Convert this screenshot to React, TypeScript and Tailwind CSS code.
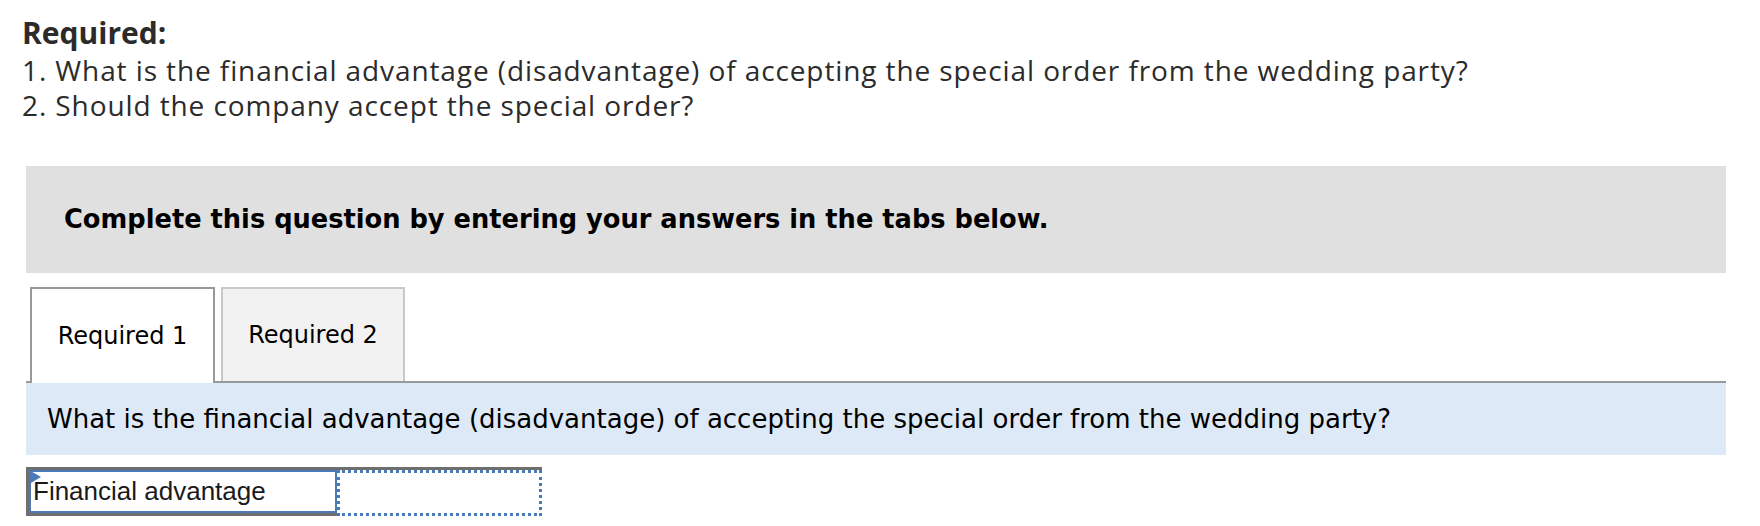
import React from "react";

export default function App() {
  return (
    <div className="w-[1760px] h-[526px] bg-white overflow-hidden">
      <div className="pl-[22px] pt-[12px] text-[#2b2b2b] font-['Open_Sans','Liberation_Sans',sans-serif]">
        <div className="text-[30px] leading-[41px] font-bold">Required:</div>
        <div className="text-[28px] leading-[35px] tracking-[0.9px]">1. What is the financial advantage (disadvantage) of accepting the special order from the wedding party?</div>
        <div className="text-[28px] leading-[35px] tracking-[0.9px]">2. Should the company accept the special order?</div>
      </div>
      <div className="ml-[26px] w-[1700px] mt-[43px] h-[107px] bg-[#e0e0e0] flex items-center pl-[38px] font-['Verdana','DejaVu_Sans',sans-serif] font-bold text-[25.7px] text-black">
        Complete this question by entering your answers in the tabs below.
      </div>
      <div className="ml-[26px] w-[1700px] mt-[14px]">
        <div className="flex items-end h-[96px] border-b-2 border-[#999] pl-[4px] gap-[6px]">
          <div className="relative w-[185px] h-[96px] -mb-[2px] bg-white border-2 border-b-0 border-[#999] flex items-center justify-center font-['Verdana','DejaVu_Sans',sans-serif] text-[24px] text-black">
            Required 1
          </div>
          <div className="w-[184px] h-[94px] bg-[#f2f2f2] border-2 border-b-0 border-[#c8c8c8] flex items-center justify-center font-['Verdana','DejaVu_Sans',sans-serif] text-[24px] text-black">
            Required 2
          </div>
        </div>
        <div className="h-[72px] bg-[#dde9f7] flex items-center pl-[21px] font-['Verdana','DejaVu_Sans',sans-serif] text-[26px] text-black">
          What is the financial advantage (disadvantage) of accepting the special order from the wedding party?
        </div>
        <div className="mt-[12px] flex border-t-[3px] border-[#6e6e6e] w-[516px]">
          <div className="relative w-[311px] h-[46px] border-l-[3px] border-b-[3px] border-[#6e6e6e]">
            <div className="h-full border-2 border-[#4a7ab8] flex items-center pl-[2px] font-['Liberation_Sans',Arial,sans-serif] text-[26px] text-[#1a1a1a]">
              Financial advantage
            </div>
            <div className="absolute left-0 top-0 w-0 h-0 border-l-[12px] border-l-[#4a7ab8] border-y-[7px] border-y-transparent" />
          </div>
          <div className="w-[205px] h-[46px] border-[3px] border-dotted border-[#4a7ab8]" />
        </div>
      </div>
    </div>
  );
}
